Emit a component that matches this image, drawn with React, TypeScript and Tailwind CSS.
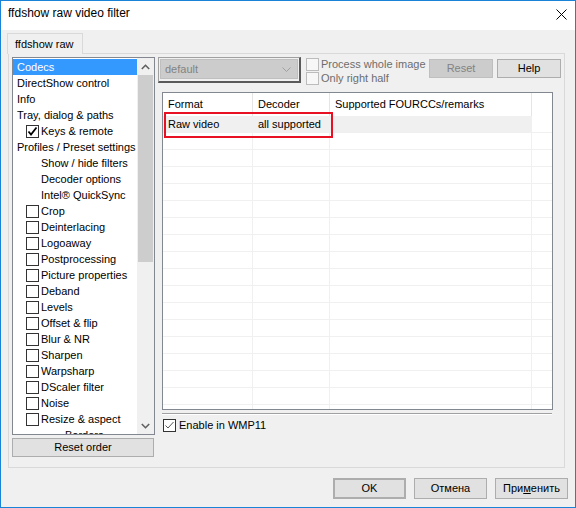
import React from 'react';

type TreeItem = {
  label: string;
  kind: 'top' | 'check' | 'sub' | 'deep';
  checked?: boolean;
  selected?: boolean;
};

const filterNames = [
  'Crop',
  'Deinterlacing',
  'Logoaway',
  'Postprocessing',
  'Picture properties',
  'Deband',
  'Levels',
  'Offset & flip',
  'Blur & NR',
  'Sharpen',
  'Warpsharp',
  'DScaler filter',
  'Noise',
  'Resize & aspect',
];

const treeItems: TreeItem[] = [
  { label: 'Codecs', kind: 'top', selected: true },
  { label: 'DirectShow control', kind: 'top' },
  { label: 'Info', kind: 'top' },
  { label: 'Tray, dialog & paths', kind: 'top' },
  { label: 'Keys & remote', kind: 'check', checked: true },
  { label: 'Profiles / Preset settings', kind: 'top' },
  { label: 'Show / hide filters', kind: 'sub' },
  { label: 'Decoder options', kind: 'sub' },
  { label: 'Intel® QuickSync', kind: 'sub' },
  ...filterNames.map((label) => ({ label, kind: 'check' as const })),
  { label: 'Borders', kind: 'deep' },
];

function TreeCheck({ checked }: { checked?: boolean }) {
  return (
    <div className="w-[13px] h-[13px] border border-[#333333] bg-white shrink-0 flex items-center justify-center">
      {checked && (
        <svg width="11" height="11" viewBox="0 0 11 11">
          <path d="M1.5 5.5 L4 8.5 L9.5 1.5" stroke="#000" strokeWidth="1.8" fill="none" />
        </svg>
      )}
    </div>
  );
}

function TreeRow({ item }: { item: TreeItem }) {
  const base = 'h-[16px] flex items-center whitespace-nowrap';
  if (item.kind === 'top') {
    return (
      <div className={`${base} pl-[4px] ${item.selected ? 'bg-[#3399ff] text-white' : ''}`}>
        {item.label}
      </div>
    );
  }
  if (item.kind === 'check') {
    return (
      <div className={`${base} pl-[13px]`}>
        <TreeCheck checked={item.checked} />
        <span className="ml-[2px]">{item.label}</span>
      </div>
    );
  }
  if (item.kind === 'sub') {
    return <div className={`${base} pl-[28px]`}>{item.label}</div>;
  }
  return <div className={`${base} pl-[52px]`}>{item.label}</div>;
}

function Chevron({ up }: { up?: boolean }) {
  return (
    <svg width="9" height="6" viewBox="0 0 9 6">
      <path
        d={up ? 'M0.8 5 L4.5 1.3 L8.2 5' : 'M0.8 1 L4.5 4.7 L8.2 1'}
        stroke="#606060"
        strokeWidth="1.6"
        fill="none"
      />
    </svg>
  );
}

function TreePanel() {
  return (
    <div className="w-[143px] h-[378px] border border-[#828790] bg-white flex overflow-hidden">
      <div className="w-[124px] pt-[1px] overflow-hidden">
        {treeItems.map((item) => (
          <TreeRow key={item.label} item={item} />
        ))}
      </div>
      <div className="w-[17px] bg-[#f0f0f0] flex flex-col">
        <div className="h-[17px] flex items-center justify-center">
          <Chevron up />
        </div>
        <div className="mx-px h-[187px] bg-[#cdcdcd]" />
        <div className="flex-1" />
        <div className="h-[17px] flex items-center justify-center">
          <Chevron />
        </div>
      </div>
    </div>
  );
}

function SmallCheck({ label }: { label: string }) {
  return (
    <div className="h-[14px] flex items-center whitespace-nowrap">
      <div className="w-[13px] h-[13px] border border-[#bcbcbc] bg-[#f7f7f7] shrink-0" />
      <span className="ml-[2px] text-[#6d6d6d]">{label}</span>
    </div>
  );
}

function PresetCombo() {
  return (
    <div className="w-[143px] h-[26px] border-l border-t border-[#a0a0a0] border-r-2 border-b-2 border-r-[#5a5a5a] border-b-[#5a5a5a] p-px shrink-0">
      <div className="h-[20px] border border-[#bfbfbf] bg-[#cccccc] flex items-center pl-[4px] pr-[6px] text-[#838383]">
        <span className="flex-1">default</span>
        <svg width="9" height="5" viewBox="0 0 9 5">
          <path d="M0.5 0.5 L4.5 4.5 L8.5 0.5" stroke="#a0a0a0" strokeWidth="1" fill="none" />
        </svg>
      </div>
    </div>
  );
}

const columns = [
  { title: 'Format', w: 'w-[90px]', cell: 'Raw video' },
  { title: 'Decoder', w: 'w-[77px]', cell: 'all supported' },
  { title: 'Supported FOURCCs/remarks', w: 'w-[202px]', cell: '' },
];

function CodecList() {
  const rows = Array.from({ length: 18 }, (_, i) => i);
  return (
    <div className="relative ml-[4px] w-[391px] h-[318px] border border-[#828790] bg-white overflow-hidden">
      <div className="h-[23px] flex">
        {columns.map((c) => (
          <div
            key={c.title}
            className={`${c.w} shrink-0 border-r border-[#e5e5e5] pl-[5px] flex items-center whitespace-nowrap`}
          >
            {c.title}
          </div>
        ))}
        <div className="flex-1" />
      </div>
      {rows.map((r) => (
        <div key={r} className="h-[17px] flex">
          {columns.map((c) => (
            <div
              key={c.title}
              className={`${c.w} shrink-0 border-r border-b border-[#f0f0f0] pl-[5px] flex items-center whitespace-nowrap ${
                r === 0 ? 'bg-[#f0f0f0]' : ''
              }`}
            >
              {r === 0 ? c.cell : ''}
            </div>
          ))}
          <div className="flex-1 border-b border-[#f0f0f0]" />
        </div>
      ))}
      <div className="absolute left-[1px] top-[19px] w-[169px] h-[26px] border-2 border-[#e81123]" />
    </div>
  );
}

function WinButton({
  children,
  className = '',
}: {
  children: React.ReactNode;
  className?: string;
}) {
  return (
    <div
      className={`h-[21px] w-[73px] border border-[#adadad] bg-[#e1e1e1] flex items-center justify-center ${className}`}
    >
      {children}
    </div>
  );
}

export default function App() {
  return (
    <div className="w-[576px] h-[508px] border border-[#1883d7] bg-[#f0f0f0] flex flex-col font-['Liberation_Sans',Arial,sans-serif] text-[11px] text-black overflow-hidden">
      {/* title bar */}
      <div className="h-[29px] bg-white flex items-start shrink-0">
        <span className="pl-[7px] pt-[5px] text-[12px] leading-[14px]">ffdshow raw video filter</span>
        <div className="flex-1" />
        <svg width="11" height="11" viewBox="0 0 11 11" className="mr-[8px] mt-[8px]">
          <path d="M0.5 0.5 L10.5 10.5 M10.5 0.5 L0.5 10.5" stroke="#000" strokeWidth="1" />
        </svg>
      </div>

      {/* tab strip */}
      <div className="pt-[3px] pl-[6px] flex shrink-0">
        <div className="relative z-10 -mb-px h-[21px] w-[76px] border border-b-0 border-[#d9d9d9] bg-[#f0f0f0] flex items-center pl-[7px]">
          ffdshow raw
        </div>
      </div>

      {/* tab page */}
      <div className="ml-[7px] w-[557px] h-[415px] border border-[#d9d9d9] p-[3px] flex shrink-0">
        <div className="w-[143px] flex flex-col">
          <TreePanel />
          <div className="mt-[3px] h-[19px] w-[142px] border border-[#adadad] bg-[#e1e1e1] flex items-center justify-center">
            Reset order
          </div>
        </div>

        <div className="ml-[3px] w-[403px] flex flex-col">
          <div className="h-[26px] flex">
            <PresetCombo />
            <div className="ml-[5px] flex flex-col">
              <SmallCheck label="Process whole image" />
              <SmallCheck label="Only right half" />
            </div>
            <div className="flex-1" />
            <div className="mt-[2px] h-[19px] w-[64px] border border-[#bfbfbf] bg-[#cccccc] text-[#838383] flex items-center justify-center">
              Reset
            </div>
            <div className="mt-[2px] ml-[4px] h-[19px] w-[64px] border border-[#adadad] bg-[#e1e1e1] flex items-center justify-center">
              Help
            </div>
          </div>

          <div className="mt-[9px]">
            <CodecList />
          </div>

          <div className="mt-[3px] ml-[4px] w-[390px] h-[2px] border-t border-t-[#a0a0a0] border-b border-b-white" />

          <div className="mt-[4px] ml-[5px] h-[13px] flex items-center">
            <div className="w-[13px] h-[13px] border border-[#333333] bg-white flex items-center justify-center">
              <svg width="11" height="11" viewBox="0 0 11 11">
                <path d="M1.5 5.5 L4 8 L9.5 2" stroke="#555" strokeWidth="1" fill="none" />
              </svg>
            </div>
            <span className="ml-[3px]">Enable in WMP11</span>
          </div>
        </div>
      </div>

      {/* dialog buttons */}
      <div className="mt-[10px] pr-[7px] flex justify-end gap-[8px]">
        <WinButton className="border-2 border-[#0078d7]">OK</WinButton>
        <WinButton>Отмена</WinButton>
        <WinButton>
          <span>
            При<span className="underline">м</span>енить
          </span>
        </WinButton>
      </div>
    </div>
  );
}
